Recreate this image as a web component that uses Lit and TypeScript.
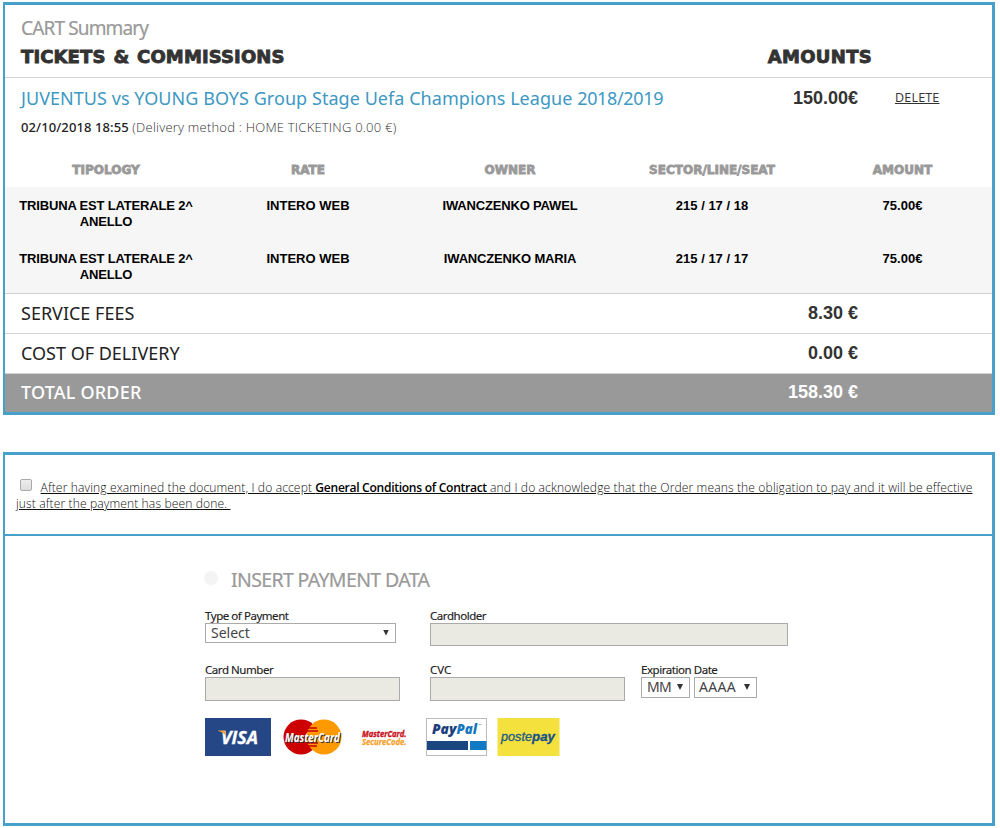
import { LitElement, html, css, svg } from "lit";
import { customElement } from "lit/decorators.js";

interface Ticket {
  typology: string;
  rate: string;
  owner: string;
  seat: string;
  amount: string;
}

const tickets: Ticket[] = [
  { typology: "TRIBUNA EST LATERALE 2^ ANELLO", rate: "INTERO WEB", owner: "IWANCZENKO PAWEL", seat: "215 / 17 / 18", amount: "75.00€" },
  { typology: "TRIBUNA EST LATERALE 2^ ANELLO", rate: "INTERO WEB", owner: "IWANCZENKO MARIA", seat: "215 / 17 / 17", amount: "75.00€" },
];

@customElement("cart-summary")
class CartSummary extends LitElement {
  static styles = css`
    :host { display: block; box-sizing: border-box; height: 413px; border: 3px solid #47a0c9; border-left-width: 2px; color: #333; }
    .head { box-sizing: border-box; height: 73px; border-bottom: 1px solid #d2d2d2; padding: 12px 16px 0; }
    .title { font: 19px/22px "Noto Sans", sans-serif; letter-spacing: -0.85px; color: #999; -webkit-text-stroke: 0.2px #999; }
    .row { display: grid; grid-template-columns: minmax(0, 1fr) 120px 104px; }
    .heavy { font: bold 18px/35px "DejaVu Sans", sans-serif; letter-spacing: 0.12px; word-spacing: 1.5px; color: #333; -webkit-text-stroke: 0.9px #333; white-space: nowrap; }
    .heavy.right { text-align: right; letter-spacing: 0.3px; }
    .event { display: grid; grid-template-columns: minmax(0, 1fr) 200px 134px; padding: 0 0 0 16px; height: 40px; align-items: center; }
    .name { font: 18px/40px "Noto Sans", sans-serif; letter-spacing: 0.05px; color: #3d98c3; white-space: nowrap; }
    .season { letter-spacing: -0.35px; }
    .money { font: bold 18px/40px "Liberation Sans", sans-serif; text-align: right; white-space: nowrap; }
    .delete { font: 12.5px/38px "Open Sans", sans-serif; letter-spacing: 0.2px; padding-left: 37px; color: #333; text-decoration: underline; }
    .when { font: 300 13px/18px "Open Sans", sans-serif; letter-spacing: 0.22px; padding-left: 16px; height: 18px; white-space: nowrap; }
    .date { font: 500 13px/18px "Noto Sans", sans-serif; letter-spacing: 0.1px; color: #222; }
    .cols { display: grid; grid-template-columns: repeat(4, 202px) 1fr; text-align: center; }
    .labels { font: bold 12px/18px "DejaVu Sans", sans-serif; color: #999; -webkit-text-stroke: 0.8px #999; padding-top: 25px; height: 51px; box-sizing: border-box; }
    .tickets { background: #f6f6f6; height: 107px; box-sizing: border-box; padding-top: 11px; border-bottom: 1px solid #d2d2d2; }
    .ticket { font: bold 13px/16px "Liberation Sans", sans-serif; color: #000; height: 53px; }
    .typology { padding: 0 12px; }
    .tight { letter-spacing: -0.17px; }
    .line { display: grid; grid-template-columns: minmax(0, 1fr) 200px 134px; padding-left: 16px; height: 39px; border-bottom: 1px solid #d2d2d2; }
    .line span { font: 18px/39px "Noto Sans", sans-serif; color: #222; }
    .line b { font: bold 18px/39px "Liberation Sans", sans-serif; text-align: right; }
    .line.total { background: #999; border: 0; height: 38px; }
    .line.total span, .line.total b { color: #fff; line-height: 37px; }
    .line.total span { font-weight: 500; letter-spacing: 0.2px; }
  `;

  render() {
    return html`
      <div class="head">
        <div class="title">CART Summary</div>
        <div class="row"><div class="heavy">TICKETS &amp; COMMISSIONS</div><div class="heavy right">AMOUNTS</div></div>
      </div>
      <div class="event">
        <div class="name">JUVENTUS vs YOUNG BOYS Group Stage Uefa Champions League <span class="season">2018/2019</span></div>
        <div class="money">150.00€</div>
        <div><a class="delete">DELETE</a></div>
      </div>
      <div class="when"><span class="date">02/10/2018 18:55</span> (Delivery method : HOME TICKETING 0.00 €)</div>
      <div class="cols labels"><span>TIPOLOGY</span><span>RATE</span><span>OWNER</span><span>SECTOR/LINE/SEAT</span><span>AMOUNT</span></div>
      <div class="tickets">
        ${tickets.map((t) => html`<div class="cols ticket">
          <span class="typology tight">${t.typology}</span><span>${t.rate}</span><span class="tight">${t.owner}</span><span>${t.seat}</span><span>${t.amount}</span>
        </div>`)}
      </div>
      <div class="line"><span>SERVICE FEES</span><b>8.30 €</b></div>
      <div class="line"><span>COST OF DELIVERY</span><b>0.00 €</b></div>
      <div class="line total"><span>TOTAL ORDER</span><b>158.30 €</b></div>
    `;
  }
}

@customElement("card-logos")
class CardLogos extends LitElement {
  static styles = css`
    :host { display: block; }
    svg { display: block; }
    text { font-family: "Open Sans", sans-serif; font-style: italic; font-weight: 700; }
    .black { font-weight: 800; }
    .poste { font-family: "Liberation Sans", sans-serif; font-weight: 400; }
    .pay { font-family: "Liberation Sans", sans-serif; }
  `;

  render() {
    return html`<svg width="360" height="40" viewBox="205 717 360 40">
      ${svg`
        <rect x="205" y="718" width="66" height="38" fill="#254786"/>
        <text x="221" y="743.500" font-size="17" fill="#fff" stroke="#fff" stroke-width=".3" textLength="37" lengthAdjust="spacingAndGlyphs">VISA</text>
        <path d="M218 730.500h6.500l2 6q-3-4.500-8.500-5.500z" fill="#f0a030"/>
        <circle cx="301" cy="737" r="17.500" fill="#c00"/>
        <circle cx="324" cy="737" r="17.500" fill="#f90"/>
        <path d="M308 728h9M307 731h11M307 743h11M308 746h9" stroke="#c00" stroke-width="1.500"/>
        <text x="286" y="742.800" font-size="12.500" fill="#333" textLength="55" lengthAdjust="spacingAndGlyphs">MasterCard</text>
        <text x="285" y="742" font-size="12.500" fill="#fff" textLength="55" lengthAdjust="spacingAndGlyphs">MasterCard</text>
        <text x="362" y="736.500" font-size="9.500" fill="#c8141e" stroke="#c8141e" stroke-width=".4" textLength="44.500" lengthAdjust="spacingAndGlyphs">MasterCard.</text>
        <text x="362" y="745" font-size="9.500" fill="#f5a12d" stroke="#f5a12d" stroke-width=".3" textLength="44.500" lengthAdjust="spacingAndGlyphs">SecureCode.</text>
        <rect x="426.500" y="718.500" width="60" height="37" fill="#fff" stroke="#bbb"/>
        <text class="black" x="432" y="733.500" font-size="13.500" fill="#1b3f7c" textLength="24.500" lengthAdjust="spacingAndGlyphs">Pay</text>
        <text class="black" x="456.500" y="733.500" font-size="13.500" fill="#1576bd" textLength="20.500" lengthAdjust="spacingAndGlyphs">Pal</text>
        <path d="M478.500 724.500h3" stroke="#9fbcd8"/>
        <rect x="427" y="741" width="41" height="9" fill="#1b4780"/>
        <rect x="470" y="741" width="16.500" height="9" fill="#1279c4"/>
        <rect x="497.500" y="718" width="62" height="38" fill="#f4e13d"/>
        <text class="poste" x="501" y="741" font-size="13" fill="#245c85" stroke="#245c85" stroke-width=".35" textLength="31" lengthAdjust="spacingAndGlyphs">poste</text>
        <text class="pay" x="532" y="741" font-size="13" fill="#17508a" stroke="#17508a" stroke-width=".3" textLength="23" lengthAdjust="spacingAndGlyphs">pay</text>
      `}
    </svg>`;
  }
}

@customElement("payment-panel")
class PaymentPanel extends LitElement {
  static styles = css`
    :host { display: block; box-sizing: border-box; height: 374px; border: 3px solid #47a0c9; border-left-width: 2px; }
    .terms { box-sizing: border-box; height: 81px; border-bottom: 2px solid #47a0c9; padding: 24px 10px 0 11px; font: 300 12.1px/16px "Open Sans", sans-serif; letter-spacing: 0.112px; color: #111; }
    .box { display: inline-block; box-sizing: border-box; width: 12px; height: 12px; border: 1px solid #aaa; border-radius: 2px; background: linear-gradient(#eee, #ddd); margin: 0 8.600px 1px 4px; }
    u { white-space: nowrap; }
    u b { font-weight: 600; letter-spacing: -0.3px; color: #000; }
    .form { padding: 31px 0 0 200px; }
    h2 { display: flex; align-items: center; margin: 0; font: 19.5px/26px "Noto Sans", sans-serif; letter-spacing: -0.63px; color: #999; height: 26px; -webkit-text-stroke: 0.2px #999; }
    .dot { width: 14px; height: 14px; border-radius: 50%; background: #f4f4f4; margin: -4px 13px 0 -1px; }
    .fields { display: grid; grid-template-columns: 225px 211px 1fr; margin-top: 15px; grid-template-rows: 54px 55px; }
    .wide { grid-column: span 2; }
    label { display: block; font: 11.5px/15px "Noto Sans", sans-serif; letter-spacing: -0.45px; color: #222; white-space: nowrap; height: 15px; -webkit-text-stroke: 0.15px #222; }
    .cvc { letter-spacing: 0; }
    .input { box-sizing: border-box; background: #eaeae2; border: 1px solid #aaa; width: 195px; height: 24px; }
    .input.holder { width: 358px; height: 23px; }
    .select { box-sizing: border-box; display: flex; justify-content: space-between; align-items: center; border: 1px solid #aaa; background: #fff; width: 191px; height: 20px; padding: 0 6px 1px 5px; font: 14px/18px "Noto Sans", sans-serif; color: #444; }
    .pair { display: flex; gap: 4px; }
    .pair .select { height: 21px; width: 49px; letter-spacing: -0.8px; }
    .pair .select.year { width: 63px; padding-left: 4px; letter-spacing: 0.3px; }
    .arrow { width: 6px; height: 6px; background: #333; clip-path: polygon(0 0, 100% 0, 50% 100%); }
  `;

  render() {
    const arrow = html`<span class="arrow"></span>`;
    return html`
      <div class="terms"><span class="box"></span><u>After having examined the document, I do accept <b>General Conditions of Contract</b> and I do acknowledge that the Order means the obligation to pay and it will be effective</u><br /><u>just after the payment has been done.&nbsp;</u></div>
      <div class="form">
        <h2><span class="dot"></span>INSERT PAYMENT DATA</h2>
        <div class="fields">
          <div><label>Type of Payment</label><div class="select">Select${arrow}</div></div>
          <div class="wide"><label>Cardholder</label><div class="input holder"></div></div>
          <div><label>Card Number</label><div class="input"></div></div>
          <div><label class="cvc">CVC</label><div class="input"></div></div>
          <div><label>Expiration Date</label><div class="pair"><div class="select">MM${arrow}</div><div class="select year">AAAA${arrow}</div></div></div>
        </div>
        <card-logos></card-logos>
      </div>
    `;
  }
}

@customElement("app-root")
class AppRoot extends LitElement {
  static styles = css`
    :host { display: flex; flex-direction: column; gap: 37px; box-sizing: border-box; height: 828px; padding: 2px 5px 0 3px; background: #fff; }
  `;

  render() {
    return html`<cart-summary></cart-summary><payment-panel></payment-panel>`;
  }
}
